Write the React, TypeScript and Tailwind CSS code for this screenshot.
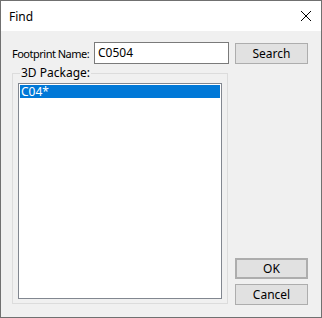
import React from "react";

const font = { fontFamily: '"Segoe UI", "Noto Sans", "Open Sans", sans-serif' };

export default function App() {
  return (
    <div
      className="w-[322px] h-[318px] border border-[#707070] flex flex-col bg-[#f0f0f0] text-[12px] text-black leading-none"
      style={font}
    >
      <div className="h-[30px] bg-white flex items-center justify-between shrink-0">
        <span className="ml-[8px] text-[12px] mt-[1px]">Find</span>
        <svg width="12" height="12" viewBox="0 0 12 12" className="mr-[9px]">
          <path d="M1 1 L11 11 M11 1 L1 11" stroke="#000" strokeWidth="1" fill="none" />
        </svg>
      </div>
      <div className="flex-1 flex flex-row">
        <div className="flex flex-col ml-[10px] w-[217px]">
          <div className="flex flex-row items-center mt-[11px] h-[22px]">
            <span className="ml-[1px] w-[82px] shrink-0 whitespace-nowrap text-[11px] tracking-[-0.5px]">Footprint Name:</span>
            <div className="w-[135px] h-[22px] shrink-0 bg-white border border-[#7a7a7a] flex items-center pl-[3px]">
              C0504
            </div>
          </div>
          <div className="relative mt-[9px] ml-[1px] w-[216px] h-[231px] border border-[#dcdcdc] pt-[9px] pl-[5px]">
            <span className="absolute left-[7px] top-[-7px] bg-[#f0f0f0] px-[1px] whitespace-nowrap">3D Package:</span>
            <div className="w-[204px] h-[216px] bg-white border border-[#828790] p-[1px]">
              <div className="h-[13px] bg-[#0078d7] text-white flex items-center pl-[1px]">C04*</div>
            </div>
          </div>
        </div>
        <div className="flex flex-col ml-[7px] w-[73px]">
          <button className="mt-[12px] h-[21px] bg-[#e1e1e1] border border-[#adadad] flex items-center justify-center">
            Search
          </button>
          <div className="flex-1" />
          <button className="h-[21px] bg-[#e1e1e1] border-2 border-[#adadad] flex items-center justify-center">
            OK
          </button>
          <button className="mt-[5px] mb-[12px] h-[21px] bg-[#e1e1e1] border border-[#adadad] flex items-center justify-center">
            Cancel
          </button>
        </div>
      </div>
    </div>
  );
}
